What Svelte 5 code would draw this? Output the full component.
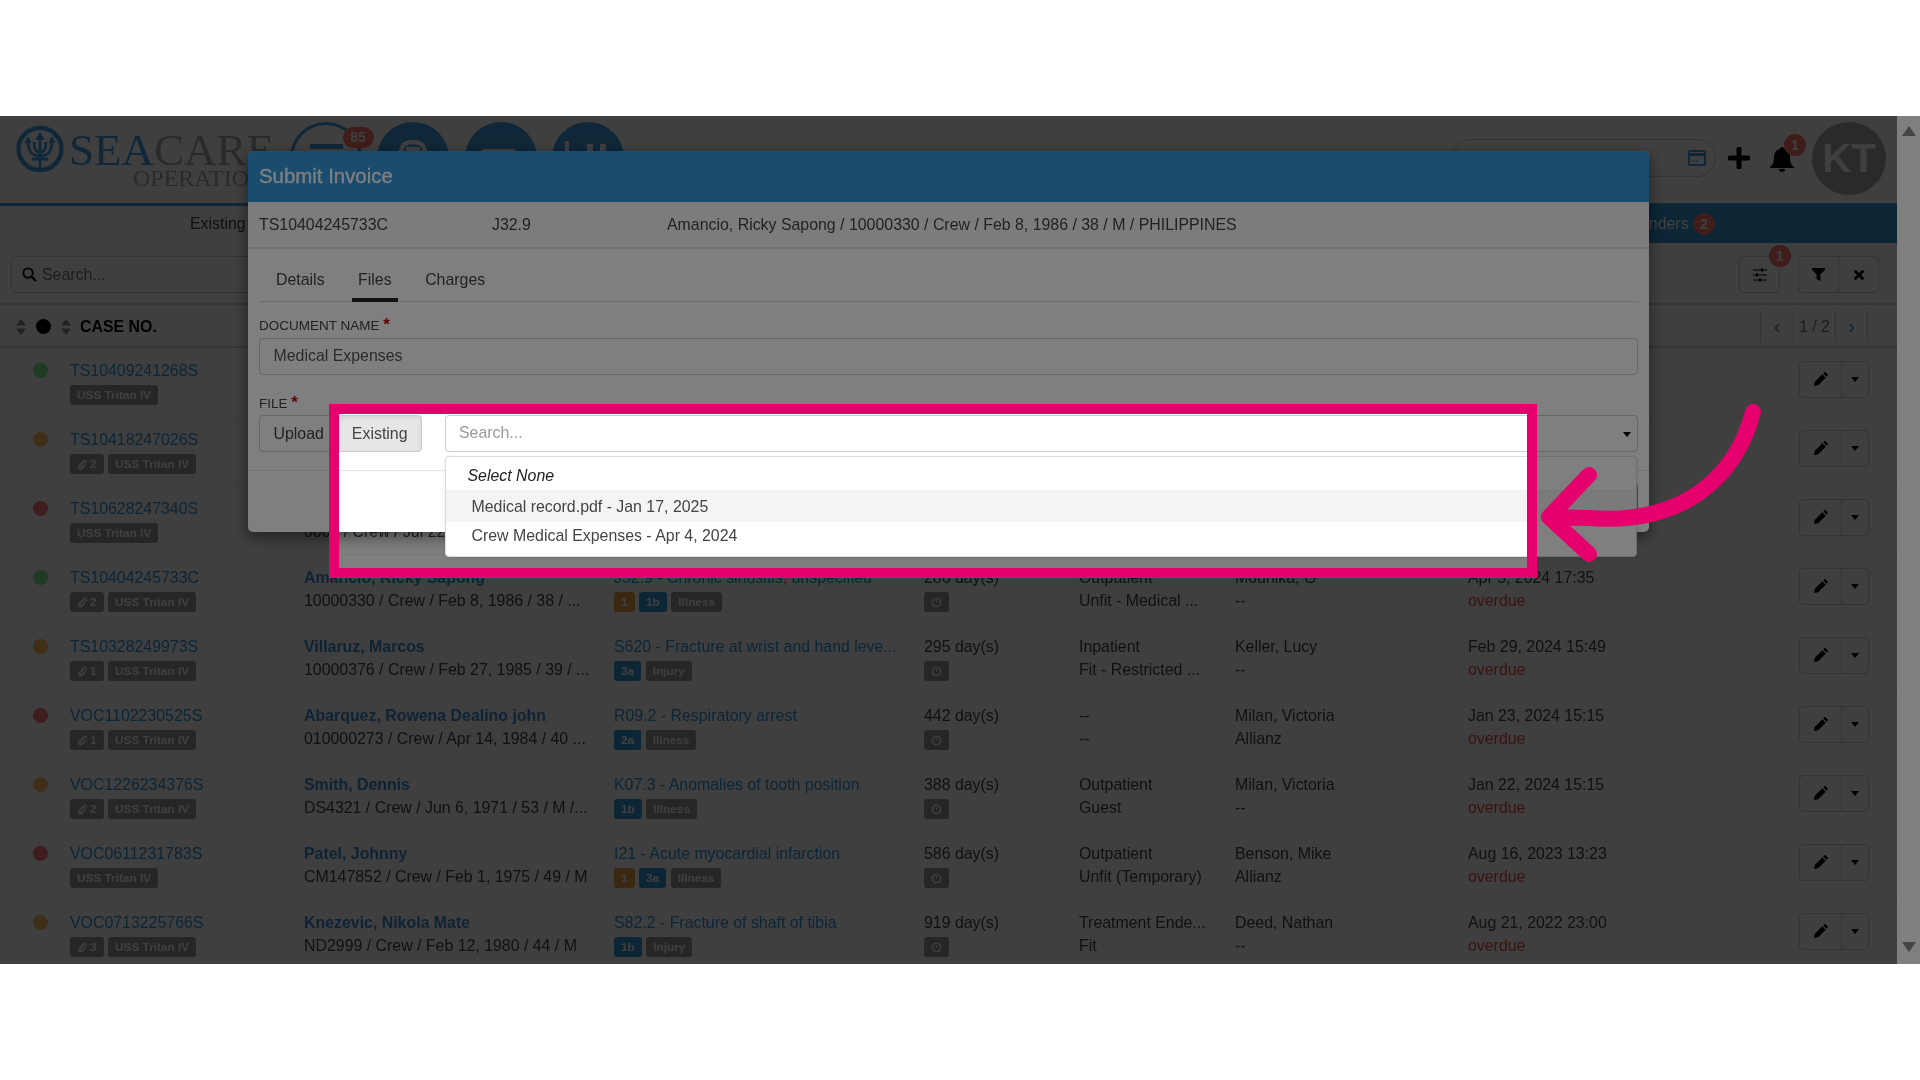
<script lang="ts">
  type Tag = { label: string; kind?: string };
  type Row = {
    caseNo: string;
    status: string;
    clips?: number;
    name?: string;
    sub?: string;
    diagnosis?: string;
    tags?: Tag[];
    days?: string;
    visit?: string;
    fitness?: string;
    owner?: string;
    insurer?: string;
    due?: string;
  };

  const rows: Row[] = [
    { caseNo: "TS10409241268S", status: "green" },
    { caseNo: "TS10418247026S", status: "orange", clips: 2 },
    { caseNo: "TS10628247340S", status: "red", name: "Reyes, Carlo", sub: "0000 / Crew / Jul 22, 1980 / 44 / M" },
    {
      caseNo: "TS10404245733C", status: "green", clips: 2,
      name: "Amancio, Ricky Sapong", sub: "10000330 / Crew / Feb 8, 1986 / 38 / ...",
      diagnosis: "J32.9 - Chronic sinusitis, unspecified",
      tags: [{ label: "1", kind: "warn" }, { label: "1b", kind: "blue" }, { label: "Illness" }],
      days: "286 day(s)", visit: "Outpatient", fitness: "Unfit - Medical ...",
      owner: "Mounika, G", insurer: "--", due: "Apr 5, 2024 17:35",
    },
    {
      caseNo: "TS10328249973S", status: "orange", clips: 1,
      name: "Villaruz, Marcos", sub: "10000376 / Crew / Feb 27, 1985 / 39 / ...",
      diagnosis: "S620 - Fracture at wrist and hand leve...",
      tags: [{ label: "3a", kind: "blue" }, { label: "Injury" }],
      days: "295 day(s)", visit: "Inpatient", fitness: "Fit - Restricted ...",
      owner: "Keller, Lucy", insurer: "--", due: "Feb 29, 2024 15:49",
    },
    {
      caseNo: "VOC1102230525S", status: "red", clips: 1,
      name: "Abarquez, Rowena Dealino john", sub: "010000273 / Crew / Apr 14, 1984 / 40 ...",
      diagnosis: "R09.2 - Respiratory arrest",
      tags: [{ label: "2a", kind: "blue" }, { label: "Illness" }],
      days: "442 day(s)", visit: "--", fitness: "--",
      owner: "Milan, Victoria", insurer: "Allianz", due: "Jan 23, 2024 15:15",
    },
    {
      caseNo: "VOC1226234376S", status: "orange", clips: 2,
      name: "Smith, Dennis", sub: "DS4321 / Crew / Jun 6, 1971 / 53 / M /...",
      diagnosis: "K07.3 - Anomalies of tooth position",
      tags: [{ label: "1b", kind: "blue" }, { label: "Illness" }],
      days: "388 day(s)", visit: "Outpatient", fitness: "Guest",
      owner: "Milan, Victoria", insurer: "--", due: "Jan 22, 2024 15:15",
    },
    {
      caseNo: "VOC0611231783S", status: "red",
      name: "Patel, Johnny", sub: "CM147852 / Crew / Feb 1, 1975 / 49 / M",
      diagnosis: "I21 - Acute myocardial infarction",
      tags: [{ label: "1", kind: "warn" }, { label: "3a", kind: "blue" }, { label: "Illness" }],
      days: "586 day(s)", visit: "Outpatient", fitness: "Unfit (Temporary)",
      owner: "Benson, Mike", insurer: "Allianz", due: "Aug 16, 2023 13:23",
    },
    {
      caseNo: "VOC0713225766S", status: "orange", clips: 3,
      name: "Knezevic, Nikola Mate", sub: "ND2999 / Crew / Feb 12, 1980 / 44 / M",
      diagnosis: "S82.2 - Fracture of shaft of tibia",
      tags: [{ label: "1b", kind: "blue" }, { label: "Injury" }],
      days: "919 day(s)", visit: "Treatment Ende...", fitness: "Fit",
      owner: "Deed, Nathan", insurer: "--", due: "Aug 21, 2022 23:00",
    },
  ];
</script>

{#snippet sortArrows()}
  <svg class="sort" viewBox="0 0 10 16" width="10" height="16"><path d="M5 0 10 6.500H0zM5 16 0 9.500h10z" /></svg>
{/snippet}

<div class="stage">
  <div class="app">
    <header class="top">
      <div class="logo">
        <svg class="trident" viewBox="0 0 48 46" width="48" height="46">
          <ellipse cx="24" cy="23" rx="21.500" ry="21" fill="none" stroke="#3f9ee0" stroke-width="4.500" />
          <path d="M24 10v32M16 33h16M12 15c0 11 4 15 12 15s12-4 12-15M18 16c0 7 2 10 6 11 4-1 6-4 6-11" fill="none" stroke="#3f9ee0" stroke-width="2.800" />
          <path d="M24 6l-4.500 8h9zM12 10l-3.500 7h7zM36 10l-3.500 7h7z" fill="#3f9ee0" />
        </svg>
        <div class="logo-text">
          <div class="brand"><span class="sea">SEA</span>CARE</div>
          <div class="sub-brand">OPERATIONS</div>
        </div>
      </div>
      <div class="shortcut ring">
        <span class="minus"></span>
        <span class="pill">85</span>
      </div>
      <div class="shortcut"><svg viewBox="0 0 72 72" width="72" height="72"><path d="M24 32c0-9 4-12 12-12s12 3 12 12v16H24zM29 27h14" fill="none" stroke="#fff" stroke-width="4.500" /></svg></div>
      <div class="shortcut"><svg viewBox="0 0 72 72" width="72" height="72"><path d="M17 27h32l10 10-10 10H17z" fill="#fff" /></svg></div>
      <div class="shortcut"><svg viewBox="0 0 72 72" width="72" height="72"><path d="M13 19h4v36h-4zM35 22h6v30h-6zM48 22h6v30h-6z" fill="#fff" /></svg></div>
      <div class="top-right">
        <div class="quick-search">
          <svg viewBox="0 0 18 16" width="18" height="16"><rect x="1" y="1" width="16" height="14" rx="1.500" fill="none" stroke="#3f9ee0" stroke-width="2" /><path d="M1 3h16v3H1z" fill="#3f9ee0" /><path d="M4 11h3M8 11h2" stroke="#3f9ee0" /></svg>
        </div>
        <svg class="plus" viewBox="0 0 22 22" width="22" height="22"><path d="M11 2v18M2 11h18" stroke="#000" stroke-width="5" stroke-linecap="round" /></svg>
        <div class="bell">
          <svg viewBox="0 0 26 28" width="26" height="28"><path d="M13 2c-1.500 0-2 1-2 2-4 1-6 4-6 8 0 5-1 8-4 10v1h24v-1c-3-2-4-5-4-10 0-4-2-7-6-8 0-1-.5-2-2-2zM10 24a3 3 0 0 0 6 0z" fill="#000" /></svg>
          <span class="count bell-count">1</span>
        </div>
        <div class="avatar">KT</div>
      </div>
    </header>

    <nav class="main-nav">
      <span class="nav-tab">Existing Cases</span>
      <div class="nav-active">Reminders <span class="count">2</span></div>
    </nav>

    <div class="filter-bar">
      <div class="search">
        <svg viewBox="0 0 16 16" width="15" height="15"><circle cx="6.500" cy="6.500" r="5" fill="none" stroke="#000" stroke-width="2" /><path d="M10.500 10.500 15 15" stroke="#000" stroke-width="2.400" /></svg>
        Search...
      </div>
      <div class="filter-actions">
        <div class="btn single">
          <svg viewBox="0 0 16 16" width="16" height="16"><path d="M1 3h14M1 8h14M1 13h14" stroke="#000" /><path d="M9 1.500h2v3H9zM4 6.500h2v3H4zM7 11.500h2v3H7z" fill="#000" /></svg>
          <span class="count filter-count">1</span>
        </div>
        <div class="btn-group">
          <div class="btn"><svg viewBox="0 0 16 16" width="15" height="15"><path d="M1 1h14v2l-5 5v7l-4-2V8L1 3z" fill="#000" /></svg></div>
          <div class="btn"><svg viewBox="0 0 14 14" width="12" height="12"><path d="M2 2l10 10M12 2 2 12" stroke="#000" stroke-width="3.200" /></svg></div>
        </div>
      </div>
    </div>

    <div class="table-head">
      {@render sortArrows()}
      <span class="head-dot"></span>
      {@render sortArrows()}
      <span class="head-title">CASE NO.</span>
      <div class="pager">
        <span class="prev">‹</span>
        <span class="pages">1 / 2</span>
        <span class="next">›</span>
      </div>
    </div>

    <div class="table-body">
      {#each rows as row}
        <div class="row">
          <div class="cell-dot"><span class="dot {row.status}"></span></div>
          <div class="cell">
            <div class="line link">{row.caseNo}</div>
            <div class="tags">
              {#if row.clips}
                <span class="tag">
                  <svg viewBox="0 0 12 14" width="10" height="12"><path d="M9 4 4 9.500c-1 1.200 1 3 2 2L11 6C12.500 4 9.500 1 8 3L2.500 8.500c-2 2.500 1.500 6 4 3.500L9.500 9" fill="none" stroke="#fff" stroke-width="1.300" /></svg>
                  {row.clips}
                </span>
              {/if}
              <span class="tag">USS Tritan IV</span>
            </div>
          </div>
          <div class="cell">
            <div class="line patient">{row.name ?? ""}</div>
            <div class="line">{row.sub ?? ""}</div>
          </div>
          <div class="cell">
            <div class="line link">{row.diagnosis ?? ""}</div>
            <div class="tags">
              {#each row.tags ?? [] as tag}
                <span class="tag {tag.kind ?? ''}">{tag.label}</span>
              {/each}
            </div>
          </div>
          <div class="cell">
            <div class="line">{row.days ?? ""}</div>
            {#if row.days}
              <div class="tags">
                <span class="tag clock">
                  <svg viewBox="0 0 12 12" width="11" height="11"><circle cx="6" cy="6" r="4.500" fill="none" stroke="#fff" stroke-width="1.600" /><path d="M6 3.500V6" stroke="#fff" stroke-width="1.400" /></svg>
                </span>
              </div>
            {/if}
          </div>
          <div class="cell">
            <div class="line">{row.visit ?? ""}</div>
            <div class="line">{row.fitness ?? ""}</div>
          </div>
          <div class="cell">
            <div class="line">{row.owner ?? ""}</div>
            <div class="line">{row.insurer ?? ""}</div>
          </div>
          <div class="cell">
            <div class="line">{row.due ?? ""}</div>
            <div class="line overdue">{row.due ? "overdue" : ""}</div>
          </div>
          <div class="btn-group row-actions">
            <div class="btn">
              <svg viewBox="0 0 16 16" width="15" height="15"><path d="M1 15l1-4.500L10 2.500 13.500 6 5.500 14zM11 1.500l1-1c.500-.500 1-.500 1.500 0l2 2c.500.500.500 1 0 1.500l-1 1z" fill="#000" /></svg>
            </div>
            <div class="btn caret-btn"><span class="caret"></span></div>
          </div>
        </div>
      {/each}
    </div>
  </div>

  <div class="backdrop"></div>

  <div class="scrollbar">
    <svg viewBox="0 0 16 12" width="16" height="12"><path d="M8 1l7 10H1z" fill="#888" /></svg>
    <svg viewBox="0 0 16 12" width="16" height="12"><path d="M8 11 1 1h14z" fill="#888" /></svg>
  </div>

  <section class="modal">
    <h2 class="modal-title">Submit Invoice</h2>
    <div class="modal-info">
      <span class="info-case">TS10404245733C</span>
      <span class="info-code">J32.9</span>
      <span>Amancio, Ricky Sapong / 10000330 / Crew / Feb 8, 1986 / 38 / M / PHILIPPINES</span>
    </div>
    <div class="modal-tabs">
      <span class="modal-tab">Details</span>
      <span class="modal-tab active">Files</span>
      <span class="modal-tab">Charges</span>
    </div>
    <div class="form-group">
      <div class="label">DOCUMENT NAME <span class="req">*</span></div>
      <div class="input filled">Medical Expenses</div>
    </div>
    <div class="form-group">
      <div class="label">FILE <span class="req">*</span></div>
      <div class="file-row">
        <div class="toggle">
          <span class="toggle-btn">Upload</span>
          <span class="toggle-btn on">Existing</span>
        </div>
        <div class="picker">
          <div class="input placeholder">Search...</div>
          <span class="select-caret"></span>
          <div class="menu">
            <div class="menu-none">Select None</div>
            <div class="menu-item hover">Medical record.pdf - Jan 17, 2025</div>
            <div class="menu-item">Crew Medical Expenses - Apr 4, 2024</div>
          </div>
        </div>
      </div>
    </div>
    <div class="modal-foot"><span class="submit">Submit</span></div>
  </section>

  <div class="spotlight"></div>

  <svg class="pointer" viewBox="0 0 1920 848" width="1920" height="848">
    <path d="M1753 296C1735 364 1680 409 1590 402L1549 401M1589 359 1549 401 1589 438" fill="none" stroke="#e6006e" stroke-width="16" stroke-linecap="round" stroke-linejoin="round" />
  </svg>
</div>

<style>
  :global(body) {
    margin: 0;
    background: #fff;
    font-family: "Liberation Sans", Arial, sans-serif;
    font-size: 15.900px;
    color: #444;
  }

  .stage {
    position: relative;
    display: flex;
    margin-top: 116px;
    height: 848px;
    width: 1920px;
    overflow: hidden;
    filter: blur(0.5px);
  }

  .app {
    width: 1897px;
    flex: none;
  }

  .top {
    display: flex;
    gap: 15.500px;
    height: 81px;
    padding-top: 6px;
    border-bottom: 3px solid #3f9ee0;
  }

  .logo {
    display: flex;
    width: 258px;
    margin-left: 16px;
    flex: none;
  }

  .trident {
    margin-top: 4px;
    flex: none;
  }

  .logo-text {
    margin-left: 5px;
    font-family: "Liberation Serif", serif;
    white-space: nowrap;
    color: #aaa;
  }

  .brand {
    font-size: 45px;
    line-height: 44px;
    margin-top: 6px;
  }

  .sea {
    color: #3f9ee0;
  }

  .sub-brand {
    font-size: 24px;
    line-height: 22px;
    margin-top: -5px;
    margin-left: 64px;
  }

  .shortcut {
    position: relative;
    width: 72px;
    height: 72px;
    flex: none;
    border-radius: 50%;
    background: #3f9ee0;
    box-sizing: border-box;
  }

  .shortcut svg {
    display: block;
  }

  .ring {
    background: none;
    border: 3px solid #3f9ee0;
  }

  .minus {
    position: absolute;
    left: 17px;
    top: 19px;
    width: 33px;
    height: 5px;
    background: #3f9ee0;
  }

  .pill {
    position: absolute;
    left: 50px;
    top: 2px;
    width: 31px;
    height: 21px;
    border-radius: 11px;
    background: #ff7468;
    color: #fff;
    font-size: 14px;
    font-weight: 700;
    line-height: 21px;
    text-align: center;
  }

  .top-right {
    display: flex;
    align-items: center;
    margin-left: auto;
    height: 73px;
    padding-right: 11px;
  }

  .quick-search {
    display: flex;
    align-items: center;
    justify-content: flex-end;
    width: 264px;
    height: 38px;
    margin-top: -2px;
    padding-right: 9px;
    box-sizing: border-box;
    border: 1px solid #ccc;
    border-radius: 19px;
  }

  .plus {
    margin: -2px 0 0 12px;
  }

  .bell {
    position: relative;
    display: flex;
    margin-left: 19px;
  }

  .count {
    display: inline-block;
    width: 22px;
    height: 22px;
    border-radius: 50%;
    background: #ff7468;
    color: #fff;
    font-size: 14px;
    font-weight: 700;
    line-height: 22px;
    text-align: center;
  }

  .bell-count {
    position: absolute;
    left: 15px;
    top: -11px;
  }

  .avatar {
    width: 74px;
    height: 73px;
    margin-left: 17px;
    border-radius: 50%;
    background: #aaa;
    color: #fff;
    font-size: 40px;
    font-weight: 700;
    line-height: 73px;
    text-align: center;
  }

  .main-nav {
    display: flex;
    height: 37px;
    line-height: 35px;
    white-space: nowrap;
  }

  .nav-tab {
    padding-left: 190px;
    width: 300px;
    flex: none;
  }

  .nav-active {
    flex: 1;
    padding-right: 182px;
    text-align: right;
    background: #3498db;
    color: #fff;
  }

  .filter-bar {
    display: flex;
    justify-content: space-between;
    height: 62px;
    padding: 13px 18px 0 11px;
    box-sizing: border-box;
    border-bottom: 2px solid #ddd;
  }

  .search {
    display: flex;
    align-items: center;
    gap: 5px;
    width: 320px;
    height: 37px;
    padding-left: 10px;
    box-sizing: border-box;
    border: 1px solid #ccc;
    border-radius: 5px;
    color: #777;
  }

  .filter-actions {
    display: flex;
    gap: 18px;
  }

  .btn {
    display: flex;
    align-items: center;
    justify-content: center;
    width: 41px;
    height: 37px;
    box-sizing: border-box;
    border: 1px solid #ccc;
    border-radius: 4px;
  }

  .single {
    position: relative;
  }

  .filter-count {
    position: absolute;
    left: 29px;
    top: -12px;
  }

  .btn-group {
    display: flex;
  }

  .btn-group .btn:first-child {
    border-radius: 4px 0 0 4px;
  }

  .btn-group .btn:last-child {
    margin-left: -1px;
    border-radius: 0 4px 4px 0;
  }

  .table-head {
    display: flex;
    align-items: center;
    gap: 10px;
    height: 43px;
    padding: 2px 0 0 16px;
    box-sizing: border-box;
    border-bottom: 2px solid #ddd;
  }

  .sort {
    fill: #888;
  }

  .head-dot {
    width: 15px;
    height: 15px;
    border-radius: 50%;
    background: #000;
  }

  .head-title {
    margin-left: -1px;
    font-weight: 700;
    color: #000;
  }

  .pager {
    display: flex;
    align-items: center;
    height: 31px;
    margin-left: auto;
    margin-right: 29px;
    border-left: 1px solid #ccc;
    text-align: center;
    color: #777;
  }

  .pager span {
    height: 31px;
    line-height: 31px;
    border-right: 1px solid #ccc;
  }

  .prev,
  .next {
    width: 31px;
    font-size: 20px;
  }

  .prev {
    width: 32px;
  }

  .pages {
    width: 41px;
  }

  .next {
    color: #3498db;
  }

  .row {
    display: grid;
    grid-template-columns: 70px 234px 310px 310px 155px 156px 233px 331px 98px;
    height: 69px;
    box-sizing: border-box;
    border-bottom: 1px solid #eee;
    white-space: nowrap;
    overflow: hidden;
  }

  .cell-dot {
    padding: 15px 0 0 33px;
  }

  .dot {
    display: block;
    width: 15px;
    height: 15px;
    border-radius: 50%;
  }

  .dot.green {
    background: #7cf08c;
  }

  .dot.orange {
    background: #ffb860;
  }

  .dot.red {
    background: #ff7078;
  }

  .cell {
    padding-top: 11px;
    overflow: hidden;
  }

  .line {
    height: 23px;
    line-height: 23px;
  }

  .link {
    color: #3498db;
  }

  .patient {
    font-weight: 700;
    color: #3f8fd0;
  }

  .overdue {
    color: #e74c3c;
  }

  .tags {
    display: flex;
    gap: 4.500px;
    margin-top: 3px;
  }

  .tag {
    display: inline-flex;
    align-items: center;
    gap: 3px;
    height: 20px;
    padding: 0 7px;
    border-radius: 3px;
    background: #999;
    color: #fff;
    font-size: 11.800px;
    font-weight: 700;
  }

  .tag.blue {
    background: #3498db;
  }

  .tag.warn {
    background: #f0a040;
  }

  .row-actions {
    margin-top: 13px;
    align-self: start;
  }

  .row-actions .btn:first-child {
    width: 43px;
  }

  .row-actions .btn:last-child {
    width: 28px;
  }

  .caret {
    border-top: 5px solid #000;
    border-left: 4.500px solid transparent;
    border-right: 4.500px solid transparent;
  }

  .backdrop {
    position: absolute;
    inset: 0;
    z-index: 1;
    background: rgba(0, 0, 0, 0.5);
  }

  .scrollbar {
    position: relative;
    z-index: 2;
    display: flex;
    flex-direction: column;
    justify-content: space-between;
    align-items: center;
    width: 23px;
    flex: none;
    padding: 9px 0 11px;
    box-sizing: border-box;
    background: #fff;
  }

  .modal {
    position: absolute;
    left: 248px;
    top: 35px;
    z-index: 3;
    width: 1401px;
    height: 381px;
    background: #fff;
    border-radius: 5px;
    box-shadow: 0 5px 15px rgba(0, 0, 0, 0.5);
  }

  .modal-title {
    height: 51px;
    margin: 0;
    padding-left: 11px;
    background: #3498db;
    border-radius: 5px 5px 0 0;
    color: #fff;
    font-size: 20.400px;
    font-weight: 400;
    -webkit-text-stroke: 0.3px #fff;
    line-height: 50px;
  }

  .modal-info {
    display: flex;
    height: 47px;
    padding-left: 11px;
    box-sizing: border-box;
    background: #f9f9f9;
    border-bottom: 2px solid #e5e5e5;
    line-height: 45px;
  }

  .info-case {
    width: 233px;
  }

  .info-code {
    width: 175px;
  }

  .modal-tabs {
    display: flex;
    gap: 21.500px;
    height: 53px;
    margin: 0 11px;
    padding-left: 11px;
    box-sizing: border-box;
    border-bottom: 1px solid #ddd;
  }

  .modal-tab {
    height: 53px;
    padding: 0 6px;
    box-sizing: border-box;
    line-height: 62px;
  }

  .modal-tab.active {
    border-bottom: 4px solid #222;
  }

  .form-group {
    margin: 13px 11px 0;
  }

  .form-group + .form-group {
    margin-top: 18px;
  }

  .label {
    height: 20px;
    margin-bottom: 3px;
    line-height: 22px;
    font-size: 13.500px;
  }

  .req {
    color: #c00;
    font-size: 17px;
    font-weight: 700;
    vertical-align: 0;
    line-height: 10px;
  }

  .form-group + .form-group .label {
    margin-bottom: 2px;
  }

  .input {
    height: 37px;
    padding-left: 13.500px;
    box-sizing: border-box;
    border: 1px solid #ccc;
    border-radius: 4px;
    line-height: 34px;
  }

  .filled {
    color: #555;
  }

  .placeholder {
    color: #999;
  }

  .file-row {
    display: flex;
    gap: 22.500px;
  }

  .toggle {
    display: flex;
    flex: none;
  }

  .toggle-btn {
    height: 37px;
    padding: 0 13.500px;
    box-sizing: border-box;
    border: 1px solid #ccc;
    line-height: 35px;
    border-radius: 4px 0 0 4px;
    color: #444;
  }

  .toggle-btn.on {
    margin-left: -1px;
    background: #e6e6e6;
    border-radius: 0 4px 4px 0;
    box-shadow: inset 0 2px 4px rgba(0, 0, 0, 0.08);
  }

  .picker {
    position: relative;
    flex: 1;
    min-width: 0;
  }

  .select-caret {
    position: absolute;
    right: 7px;
    top: 17px;
    border-top: 5px solid #000;
    border-left: 4.500px solid transparent;
    border-right: 4.500px solid transparent;
  }

  .menu {
    position: absolute;
    left: 0;
    right: 1px;
    top: 41px;
    z-index: 2;
    height: 101px;
    box-sizing: border-box;
    padding-top: 3px;
    background: #fff;
    border: 1px solid #ddd;
    border-radius: 4px;
    box-shadow: 0 2px 4px rgba(0, 0, 0, 0.1);
  }

  .menu-none {
    height: 30px;
    padding-left: 22px;
    line-height: 31px;
    font-style: italic;
    color: #222;
    border-bottom: 1px solid #eee;
  }

  .menu-item {
    height: 30px;
    padding-left: 26px;
    line-height: 28px;
    color: #444;
  }

  .menu-item.hover {
    height: 31px;
    line-height: 31px;
    background: #f4f4f4;
  }

  .modal-foot {
    display: flex;
    justify-content: flex-end;
    margin-top: 18px;
    padding: 12px 11px;
    border-top: 1px solid #e5e5e5;
  }

  .submit {
    height: 37px;
    padding: 0 20px;
    box-sizing: border-box;
    background: #2ecc71;
    border-radius: 4px;
    color: #fff;
    line-height: 37px;
  }

  .spotlight {
    position: absolute;
    left: 329px;
    top: 288px;
    z-index: 4;
    width: 1208px;
    height: 174px;
    box-sizing: border-box;
    border: 10px solid #e6006e;
    box-shadow: 0 0 0 3000px rgba(0, 0, 0, 0.5);
  }

  .pointer {
    position: absolute;
    left: 0;
    top: 0;
    z-index: 5;
  }
</style>
